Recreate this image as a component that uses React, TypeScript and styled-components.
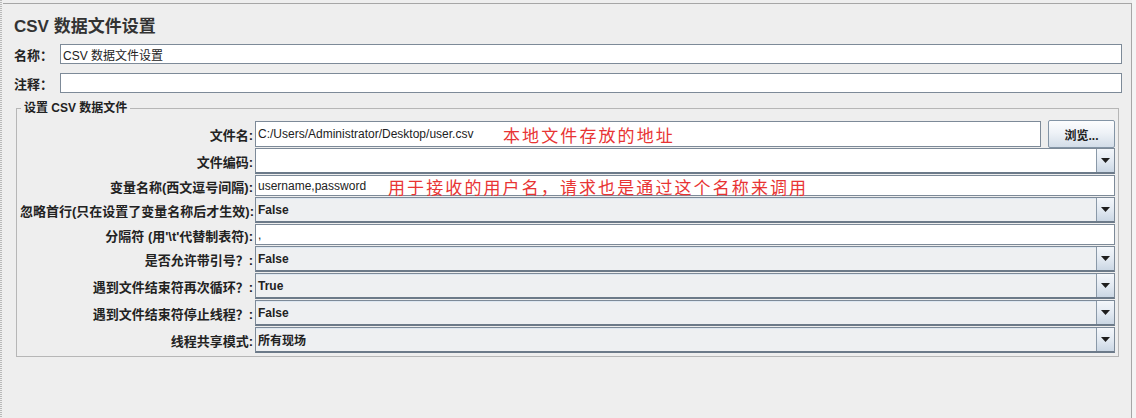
import React from "react";
import styled, { createGlobalStyle } from "styled-components";

const GlobalStyle = createGlobalStyle`
  html, body {
    margin: 0;
    padding: 0;
    background: #eeeeee;
  }
  body {
    font-family: "Liberation Sans", "Noto Sans CJK SC", sans-serif;
    font-size: 12px;
    color: #222;
  }
`;

const Frame = styled.div`
  display: flex;
  width: 1136px;
  height: 418px;
  background: #eeeeee;
  overflow: hidden;
`;
// dotted splitter on the left edge
const LeftEdge = styled.div`
  width: 3px;
  flex-shrink: 0;
  background-image: repeating-linear-gradient(
    to bottom,
    #b9b9b9 0 1px,
    #eeeeee 1px 2px
  );
  background-size: 2px 100%;
  background-repeat: no-repeat;
`;
const RightEdge = styled.div`
  width: 4px;
  flex-shrink: 0;
  background: #f4f4f4;
`;
const Panel = styled.div`
  flex: 1;
  margin-top: 3px;
  border-top: 1px solid #a6a6a6;
  border-right: 1px solid #a6a6a6;
  padding: 11px 9px 0 11px;
  box-sizing: border-box;
`;
const Title = styled.div`
  font-size: 17px;
  font-weight: bold;
  line-height: 24px;
  height: 24px;
  color: #333;
`;
const TopRow = styled.div<{ $gap: number }>`
  display: flex;
  align-items: center;
  height: 20px;
  margin-top: ${(p) => p.$gap}px;
`;
const TopLabel = styled.div`
  width: 46px;
  flex-shrink: 0;
  font-weight: bold;
  font-size: 13px;
  color: #222;
`;
const TextInput = styled.input<{ $h?: number }>`
  flex: 1;
  min-width: 0;
  width: 100%;
  height: ${(p) => p.$h ?? 20}px;
  box-sizing: border-box;
  border: 1px solid #7d8a98;
  background: #fff;
  padding: 0 2px;
  margin: 0;
  font-family: "Liberation Sans", "Noto Sans CJK SC", sans-serif;
  font-size: 12px;
  color: #222;
  outline: none;
`;
const Group = styled.fieldset`
  margin: 8px 3px 0 2px;
  padding: 5px 3px 2px 3px;
  border: 1px solid #b6b6b6;
  min-width: 0;
`;
const GroupTitle = styled.legend`
  margin-left: 1px;
  padding: 0 3px;
  font-weight: bold;
  font-size: 12px;
  line-height: 14px;
  color: #222;
`;
const Form = styled.div`
  display: grid;
  grid-template-columns: 233px 1fr;
  column-gap: 2px;
  align-items: center;
`;
const FieldLabel = styled.div`
  text-align: right;
  white-space: nowrap;
  font-weight: bold;
  font-size: 13px;
  color: #222;
`;
const FileCell = styled.div`
  position: relative;
  display: flex;
  align-items: center;
  gap: 7px;
  height: 28px;
`;
const TextCell = styled.div`
  position: relative;
  display: flex;
  align-items: flex-end;
  height: 21px;
  margin-bottom: 1px;
`;
const BrowseBtn = styled.button`
  width: 67px;
  height: 28px;
  flex-shrink: 0;
  box-sizing: border-box;
  border: 1px solid #8394a5;
  border-radius: 2px;
  background: linear-gradient(to bottom, #fdfdfe 0%, #eef2f7 45%, #d3dde8 100%);
  font-family: "Liberation Sans", "Noto Sans CJK SC", sans-serif;
  font-size: 12px;
  font-weight: bold;
  color: #222;
  padding: 0;
`;
const Combo = styled.div<{ $editable?: boolean }>`
  display: flex;
  height: 26px;
  margin-bottom: 1px;
  box-sizing: border-box;
  border: 1px solid #7d8a98;
  border-bottom: 2px solid #6c7a89;
  background: ${(p) => (p.$editable ? "#ffffff" : "#eef0f2")};
  box-shadow: inset 0 1px 0 ${(p) => (p.$editable ? "#ffffff" : "#dde7f1")};
`;
const ComboValue = styled.div`
  flex: 1;
  display: flex;
  align-items: center;
  padding-left: 2px;
  font-weight: bold;
  font-size: 12px;
  color: #222;
`;
const ArrowBtn = styled.div`
  width: 17px;
  flex-shrink: 0;
  display: flex;
  align-items: center;
  justify-content: center;
  border-left: 1px solid #8a99a8;
  background: linear-gradient(to bottom, #f4f7fb 0%, #e3eaf2 50%, #cbd7e4 100%);
`;
const Note = styled.span<{ $left: number; $top: number }>`
  position: absolute;
  left: ${(p) => p.$left}px;
  top: ${(p) => p.$top}px;
  font-family: "Noto Sans CJK SC", sans-serif;
  font-size: 17px;
  line-height: 20px;
  letter-spacing: 2.1px;
  color: #e83434;
  white-space: nowrap;
  pointer-events: none;
`;

function DropArrow() {
  return (
    <svg width="9" height="5" viewBox="0 0 9 5">
      <polygon points="0,0 9,0 4.5,5" fill="#1e1e1e" />
    </svg>
  );
}

function Select({ value, editable }: { value?: string; editable?: boolean }) {
  return (
    <Combo $editable={editable}>
      <ComboValue>{value}</ComboValue>
      <ArrowBtn>
        <DropArrow />
      </ArrowBtn>
    </Combo>
  );
}

export default function App() {
  return (
    <>
      <GlobalStyle />
      <Frame>
        <LeftEdge />
        <Panel>
          <Title>CSV 数据文件设置</Title>
          <TopRow $gap={5}>
            <TopLabel>名称：</TopLabel>
            <TextInput readOnly value="CSV 数据文件设置" />
          </TopRow>
          <TopRow $gap={9}>
            <TopLabel>注释：</TopLabel>
            <TextInput readOnly value="" />
          </TopRow>
          <Group>
            <GroupTitle>设置 CSV 数据文件</GroupTitle>
            <Form>
              <FieldLabel>文件名:</FieldLabel>
              <FileCell>
                <TextInput
                  $h={26}
                  readOnly
                  value="C:/Users/Administrator/Desktop/user.csv"
                />
                <BrowseBtn>浏览...</BrowseBtn>
                <Note $left={248} $top={5}>本地文件存放的地址</Note>
              </FileCell>

              <FieldLabel>文件编码:</FieldLabel>
              <Select editable />

              <FieldLabel>变量名称(西文逗号间隔):</FieldLabel>
              <TextCell>
                <TextInput $h={21} readOnly value="username,password" />
                <Note $left={133} $top={2}>
                  用于接收的用户名，请求也是通过这个名称来调用
                </Note>
              </TextCell>

              <FieldLabel>忽略首行(只在设置了变量名称后才生效):</FieldLabel>
              <Select value="False" />

              <FieldLabel>{"分隔符 (用'\\t'代替制表符):"}</FieldLabel>
              <TextCell>
                <TextInput $h={21} readOnly value="," />
              </TextCell>

              <FieldLabel>是否允许带引号？:</FieldLabel>
              <Select value="False" />

              <FieldLabel>遇到文件结束符再次循环？:</FieldLabel>
              <Select value="True" />

              <FieldLabel>遇到文件结束符停止线程？:</FieldLabel>
              <Select value="False" />

              <FieldLabel>线程共享模式:</FieldLabel>
              <Select value="所有现场" />
            </Form>
          </Group>
        </Panel>
        <RightEdge />
      </Frame>
    </>
  );
}
